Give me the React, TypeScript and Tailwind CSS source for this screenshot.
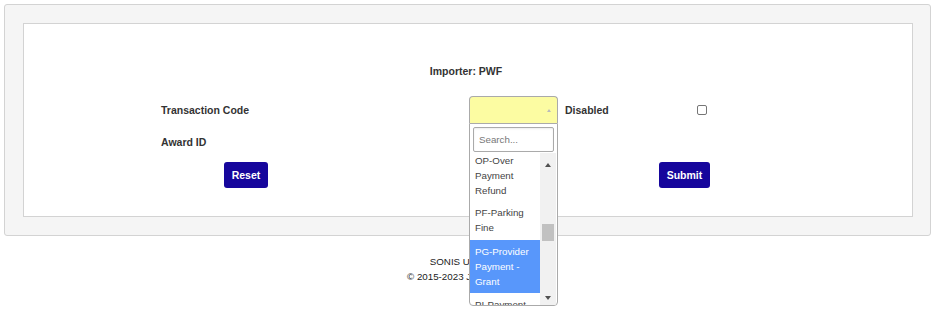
export default function App() {
  return (
    <div className="relative w-[936px] h-[315px] bg-white overflow-hidden font-['Liberation_Sans',Arial,sans-serif] text-[#333]">
      <div className="ml-[4px] mr-[5px] mt-[4px] h-[232px] border border-[#d3d3d3] bg-[#f5f5f5] rounded-[3px] pt-[18px] pl-[18px] pr-[17px] pb-[18px]">
        <div className="h-full border border-[#d3d3d3] bg-white">
          <div className="pt-[40px] pr-[4px] text-center text-[10.5px] leading-[15px] font-bold">
            Importer: PWF
          </div>

          <div className="mt-[17px] flex h-[27px] items-center text-[10.5px] font-bold">
            <div className="w-[137px] shrink-0" />
            <div className="w-[308px] shrink-0 pt-[2px]">Transaction Code</div>
            <div className="w-[96px] shrink-0 h-full">
              <div className="relative w-[89px] h-full">
                <div className="h-full border-t border-x border-[#aaa] rounded-t-[4px] bg-[#fcfca2] flex items-center justify-end pr-[6px]">
                  <div className="w-0 h-0 border-x-[2.5px] border-x-transparent border-b-[3px] border-b-[#bbbbbb]" />
                </div>
                <Dropdown />
              </div>
            </div>
            <div className="w-[132px] shrink-0 pt-[2px]">Disabled</div>
            <div className="w-[10px] h-[10px] border border-[#767676] rounded-[2px] bg-white" />
          </div>

          <div className="mt-[5px] flex h-[27px] items-center text-[10.5px] font-bold">
            <div className="w-[137px] shrink-0" />
            <div className="pt-[2px]">Award ID</div>
          </div>

          <div className="mt-[7px] flex h-[26px] text-[10.5px] font-bold">
            <div className="w-[137px] shrink-0" />
            <div className="w-[308px] shrink-0 pl-[63px]">
              <button className="w-[44px] h-[26px] pt-[2px] rounded-[3px] bg-[#16069c] text-white font-bold">
                Reset
              </button>
            </div>
            <div className="w-[96px] shrink-0" />
            <div className="pl-[94px]">
              <button className="w-[51px] h-[26px] pt-[2px] rounded-[3px] bg-[#16069c] text-white font-bold">
                Submit
              </button>
            </div>
          </div>
        </div>
      </div>

      <div className="mt-[18px] text-center text-[9.75px] leading-[15px] text-[#222]">
        <div className="pr-[12px]">SONIS Utilities</div>
        <div className="pr-[2px]">© 2015-2023 Jenzabar, Inc.</div>
      </div>
    </div>
  );
}

function Dropdown() {
  return (
    <div className="absolute left-0 top-full z-10 w-[89px] h-[183px] border border-[#aaa] rounded-b-[4px] bg-white flex flex-col overflow-hidden font-normal">
      <div className="px-[3px] pt-[3px] pb-[1px]">
        <div className="h-[25px] border border-[#aaa] rounded-[2px] bg-white flex items-center pl-[5px] pt-[2px] text-[9.75px] text-[#777] shadow-[inset_0_1px_2px_rgba(0,0,0,0.08)]">
          Search...
        </div>
      </div>
      <div className="flex h-[152px]">
        <div className="w-[70px] overflow-hidden text-[9.75px] leading-[15px] text-[#444]">
          <div className="-mt-[4px]">
            <div className="py-[4px] pl-[5px]">
              OP-Over
              <br />
              Payment
              <br />
              Refund
            </div>
            <div className="pt-[3px] pb-[5px] pl-[5px]">
              PF-Parking
              <br />
              Fine
            </div>
            <div className="py-[4px] pl-[5px] bg-[#5897fb] text-white">
              PG-Provider
              <br />
              Payment -
              <br />
              Grant
            </div>
            <div className="py-[4px] pl-[5px]">
              PI-Payment
              <br />
              Income
            </div>
          </div>
        </div>
        <div className="w-[16px] h-full bg-[#f1f1f1] flex flex-col items-center">
          <div className="h-[19px] w-full flex items-center justify-center pt-[4px]">
            <div className="w-0 h-0 border-x-[3.5px] border-x-transparent border-b-[4px] border-b-[#505050]" />
          </div>
          <div className="mt-[52px] w-[12px] h-[17px] bg-[#c1c1c1]" />
          <div className="flex-1" />
          <div className="h-[15px] w-full flex items-center justify-center">
            <div className="w-0 h-0 border-x-[3.5px] border-x-transparent border-t-[4px] border-t-[#505050]" />
          </div>
        </div>
      </div>
    </div>
  );
}
